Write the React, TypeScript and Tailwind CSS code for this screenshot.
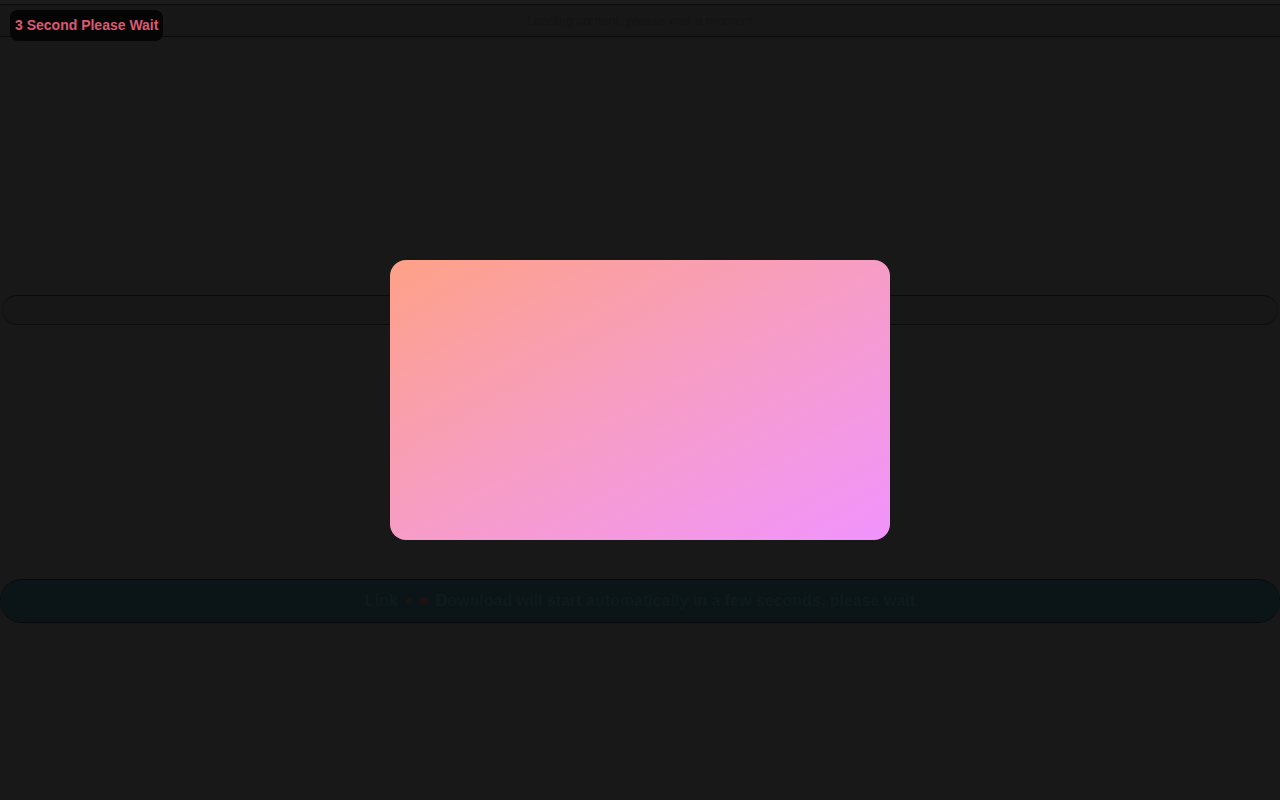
import React from "react";

export default function App() {
  return (
    <div className="relative w-[1280px] h-[800px] overflow-hidden bg-[#181818]" style={{ fontFamily: '"Liberation Sans", Arial, sans-serif' }}>
      <div className="flex flex-col">
        <div className="h-[4px] bg-[#1c1c1c]" />
        <div className="h-[33px] bg-[#171717] border-t border-b border-[#0a0a0a] flex items-center justify-center">
          <span className="text-[13px] text-[#141414]">Loading content, please wait a moment</span>
        </div>
        <div className="h-[258px]" />
        <div className="h-[30px] mx-[2px] rounded-full bg-[#171717] border-t border-b border-[#0c0c0c]" />
        <div className="h-[254px]" />
        <div className="h-[44px] rounded-full bg-[#0b1517] border-t border-b border-[#060a0b] flex items-center justify-center gap-2">
          <span className="text-[16px] font-bold text-[#0e1a1d]">Link</span>
          <span className="w-[6px] h-[6px] rounded-full bg-[#1a1410]" />
          <span className="w-[8px] h-[8px] rounded-full bg-[#1e1210]" />
          <span className="text-[16px] font-bold text-[#0e1a1d]">Download will start automatically in a few seconds, please wait</span>
        </div>
      </div>

      <div className="absolute left-[10px] top-[10px] h-[31px] px-[5px] flex items-center rounded-lg bg-[#050505]">
        <span className="text-[14px] font-bold text-[#dc5a70]">3 Second Please Wait</span>
      </div>

      <div className="absolute left-[390px] top-[260px] w-[500px] h-[280px] rounded-[16px] bg-gradient-to-br from-[#fea186] to-[#f193fd]" />
    </div>
  );
}
